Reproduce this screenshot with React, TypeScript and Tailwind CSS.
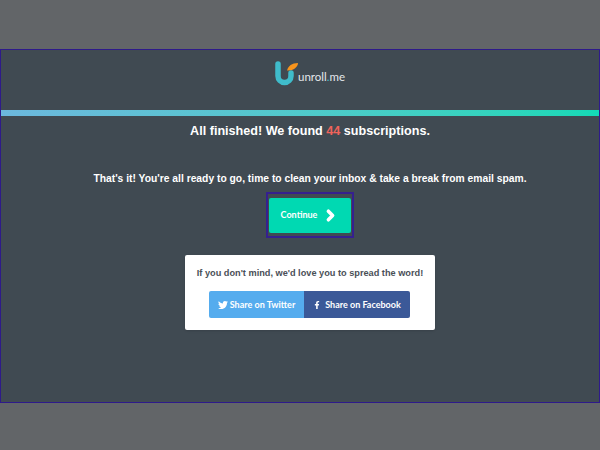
import { ChevronRight } from 'lucide-react';
import { FaTwitter, FaFacebookF } from 'react-icons/fa';

function Logo() {
  return (
    <div className="flex items-end h-[25px]">
      <svg width="23" height="25" viewBox="0 0 23 25" fill="none">
        <path d="M3 3 V15 A6.500 6.500 0 0 0 16 15 V12" stroke="#3fbccb" strokeWidth="5.5" strokeLinecap="round" />
        <path d="M12 9.500 C13 5 17 2 23 2 C23 6 18 10 12 9.500 Z" fill="#f7941d" />
      </svg>
      <span className="text-[11.5px] leading-none text-[#e4e7ea] mb-[4px] font-['Lato',sans-serif]">
        unroll<span className="text-[#3fbccb]">.</span>me
      </span>
    </div>
  );
}

function App() {
  return (
    <div className="w-[600px] h-[450px] flex flex-col bg-[#626568] font-['Liberation_Sans',sans-serif] overflow-hidden">
      <div className="h-[49px]" />
      <div className="h-[354px] bg-[#404a52] border border-[#2e1a8a] flex flex-col">
        <div className="pt-[11px] h-[60px] pl-[20px] flex justify-center">
          <Logo />
        </div>
        <div className="w-full h-[6px] bg-gradient-to-r from-[#6cb8de] to-[#12d9b6]" />
        <div className="pl-[20px] flex flex-col items-center">
          <h1 className="mt-[7px] text-[12.6px] leading-[16px] font-bold text-white whitespace-nowrap">
            All finished! We found <span className="text-[#f0635a]">44</span> subscriptions.
          </h1>
          <p className="mt-[33px] text-[10.3px] leading-[14px] font-bold text-white whitespace-nowrap">
            That's it! You're all ready to go, time to clean your inbox &amp; take a break from email spam.
          </p>
          <div className="mt-[6px] w-[88px] h-[46px] border-2 border-[#35208f] flex items-center justify-center">
            <button className="w-[82px] h-[35px] rounded-[2px] bg-[#00d9b2] flex items-center justify-center gap-[5px] text-white text-[9px] font-bold font-['Lato',sans-serif]">
              Continue
              <ChevronRight size={17} strokeWidth={5} />
            </button>
          </div>
          <div className="mt-[17px] w-[250px] h-[75px] rounded-[2px] bg-white flex flex-col items-center shadow-sm">
            <p className="mt-[11px] text-[9.2px] leading-[14px] font-bold text-[#4a4f57] whitespace-nowrap">
              If you don't mind, we'd love you to spread the word!
            </p>
            <div className="mt-[11px] mr-[1px] flex h-[27px] text-white text-[9px] font-bold font-['Lato',sans-serif] whitespace-nowrap">
              <button className="w-[95px] rounded-l-[2px] bg-[#55acee] flex items-center justify-center gap-[2px]">
                <FaTwitter size={10} />
                Share on Twitter
              </button>
              <button className="w-[106px] rounded-r-[2px] bg-[#3b5998] flex items-center justify-center gap-[4px]">
                <FaFacebookF size={8} />
                Share on Facebook
              </button>
            </div>
          </div>
        </div>
      </div>
      <div className="flex-1" />
    </div>
  );
}

export default App;
